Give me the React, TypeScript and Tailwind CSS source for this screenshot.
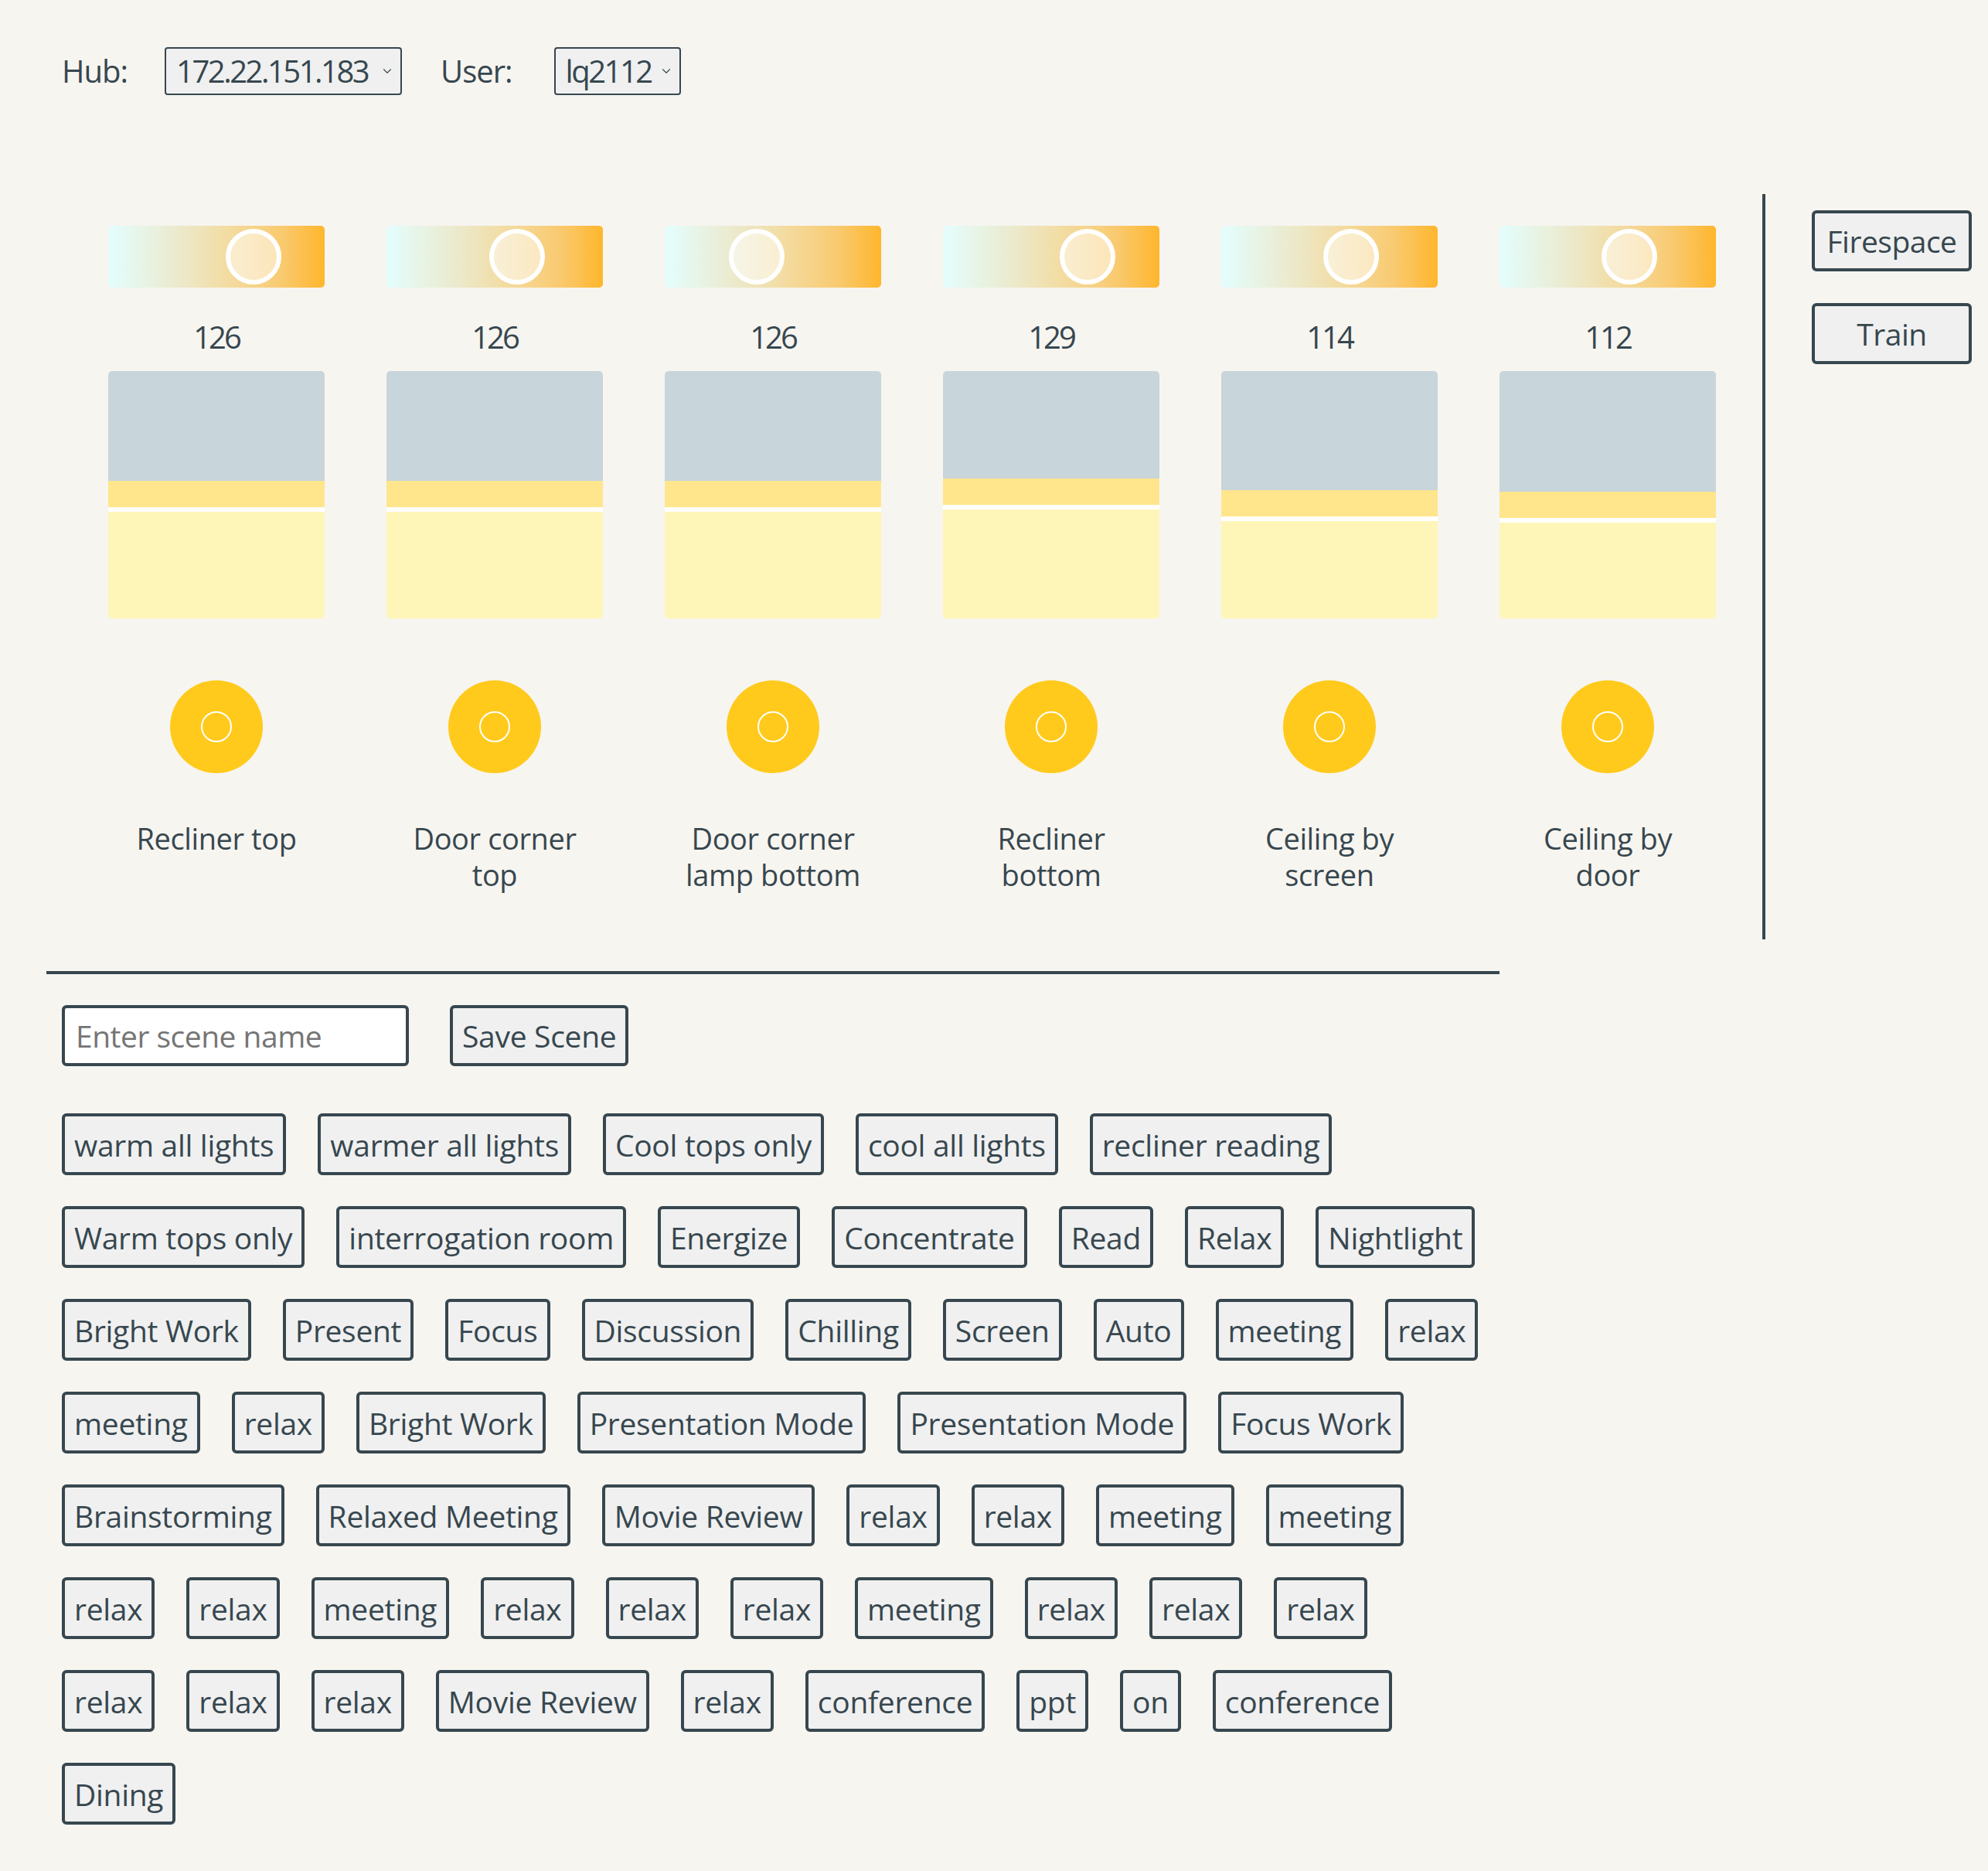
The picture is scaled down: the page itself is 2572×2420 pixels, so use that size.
import { ChevronDown } from 'lucide-react';

interface Light {
  name: string[];
  value: number;
  knob: number; // left offset of the colour knob, px
}

const LIGHTS: Light[] = [
  { name: ['Recliner top'], value: 126, knob: 152 },
  { name: ['Door corner', 'top'], value: 126, knob: 133 },
  { name: ['Door corner', 'lamp bottom'], value: 126, knob: 83 },
  { name: ['Recliner', 'bottom'], value: 129, knob: 151 },
  { name: ['Ceiling by', 'screen'], value: 114, knob: 132 },
  { name: ['Ceiling by', 'door'], value: 112, knob: 132 },
];

const SCENE_ROWS: string[][] = [
  ['warm all lights', 'warmer all lights', 'Cool tops only', 'cool all lights', 'recliner reading'],
  ['Warm tops only', 'interrogation room', 'Energize', 'Concentrate', 'Read', 'Relax', 'Nightlight'],
  ['Bright Work', 'Present', 'Focus', 'Discussion', 'Chilling', 'Screen', 'Auto', 'meeting', 'relax'],
  ['meeting', 'relax', 'Bright Work', 'Presentation Mode', 'Presentation Mode', 'Focus Work'],
  ['Brainstorming', 'Relaxed Meeting', 'Movie Review', 'relax', 'relax', 'meeting', 'meeting'],
  ['relax', 'relax', 'meeting', 'relax', 'relax', 'relax', 'meeting', 'relax', 'relax', 'relax'],
  ['relax', 'relax', 'relax', 'Movie Review', 'relax', 'conference', 'ppt', 'on', 'conference'],
  ['Dining'],
];

function FakeSelect({ value, width }: { value: string; width: string }) {
  return (
    <div
      className={`${width} h-[62px] flex items-center justify-between pl-[13px] pr-[8px] border-2 border-[#37474f] rounded-[4px] bg-[#f0f0f0]`}
    >
      <span className="tracking-[-2.5px]">{value}</span>
      <ChevronDown size={18} strokeWidth={1.5} />
    </div>
  );
}

function LightColumn({ light }: { light: Light }) {
  return (
    <div className="w-[360px] px-[40px] pt-[41px] pb-[57px] flex flex-col items-center">
      {/* colour temperature slider */}
      <div className="relative w-[280px] h-[80px] rounded-[5px] bg-[linear-gradient(to_right,#e4fcfa_3%,#ece8c8_35%,#f3dca2_55%,#f9ca70_80%,#ffb62c_100%)]">
        <div
          className="absolute top-[4px] w-[72px] h-[72px] rounded-full border-[6px] border-white bg-white/50"
          style={{ left: light.knob }}
        />
      </div>

      <div className="mt-[40px] text-[40px] leading-[48px] tracking-[-3px]">{light.value}</div>

      {/* brightness bar */}
      <div className="mt-[20px] w-[280px] h-[320px] rounded-[5px] overflow-hidden flex flex-col">
        <div className="flex-1 bg-[#c8d5db]" />
        <div className="h-[34px] bg-[#ffe68c]" />
        <div className="h-[6px] bg-white" />
        <div className="bg-[#fef6b8]" style={{ height: light.value + 12 }} />
      </div>

      <div className="mt-[80px] w-[120px] h-[120px] rounded-full bg-[#ffca1c] flex items-center justify-center">
        <div className="w-[40px] h-[40px] rounded-full border-2 border-white" />
      </div>

      <div className="mt-[62px] h-[96px] flex flex-col gap-[3px] text-[38px] leading-[44px] tracking-[-0.4px] text-center">
        {light.name.map((line, i) => (
          <div key={i}>{line}</div>
        ))}
      </div>
    </div>
  );
}

function SceneButton({ label }: { label: string }) {
  return (
    <button className="h-[80px] px-[12px] border-[4px] border-[#37474f] rounded-[6px] bg-[#f0f0f0] text-[39px] tracking-[-0.3px] leading-none whitespace-nowrap">
      {label}
    </button>
  );
}

export default function App() {
  return (
    <div className="min-h-[2420px] w-[2572px] bg-[#f7f5f0] text-[#37474f] font-['Open_Sans',sans-serif]">
      {/* Hub / user pickers */}
      <div className="flex items-center pl-[80px] pt-[61px] text-[40px]">
        <span className="tracking-[-1px]">Hub:</span>
        <div className="ml-[48px]">
          <FakeSelect value="172.22.151.183" width="w-[307px]" />
        </div>
        <span className="ml-[50px] tracking-[-1px]">User:</span>
        <div className="ml-[54px]">
          <FakeSelect value="lq2112" width="w-[164px]" />
        </div>
      </div>

      {/* Lights */}
      <div className="mt-[128px] flex pl-[100px]">
        <div className="flex">
          {LIGHTS.map((light, i) => (
            <LightColumn key={i} light={light} />
          ))}
        </div>
        <div className="ml-[20px] w-[4px] bg-[#37474f]" />
        <div className="pl-[60px] pt-[21px] flex flex-col gap-[41px]">
          <button className="w-[207px] h-[79px] border-[4px] border-[#37474f] rounded-[6px] bg-[#f0f0f0] text-[39px] tracking-[-0.5px] leading-none">
            Firespace
          </button>
          <button className="w-[207px] h-[79px] border-[4px] border-[#37474f] rounded-[6px] bg-[#f0f0f0] text-[39px] tracking-[-0.5px] leading-none">
            Train
          </button>
        </div>
      </div>

      <div className="mt-[41px] ml-[60px] w-[1880px] h-[4px] bg-[#37474f]" />

      {/* Scenes */}
      <div className="pl-[80px] pt-[40px] pb-[61px]">
        <div className="flex items-center">
          <input
            placeholder="Enter scene name"
            className="w-[449px] h-[79px] px-[14px] border-[4px] border-[#37474f] rounded-[6px] bg-white text-[39px] tracking-[-0.5px] placeholder:text-[#757575] outline-none"
          />
          <button className="ml-[53px] h-[79px] px-[12px] border-[4px] border-[#37474f] rounded-[6px] bg-[#f0f0f0] text-[39px] tracking-[-0.3px] leading-none">
            Save Scene
          </button>
        </div>

        <div className="mt-[61px] flex flex-col gap-y-[40px]">
          {SCENE_ROWS.map((row, r) => (
            <div key={r} className="flex gap-x-[41px]">
              {row.map((label, i) => (
                <SceneButton key={i} label={label} />
              ))}
            </div>
          ))}
        </div>
      </div>
    </div>
  );
}
